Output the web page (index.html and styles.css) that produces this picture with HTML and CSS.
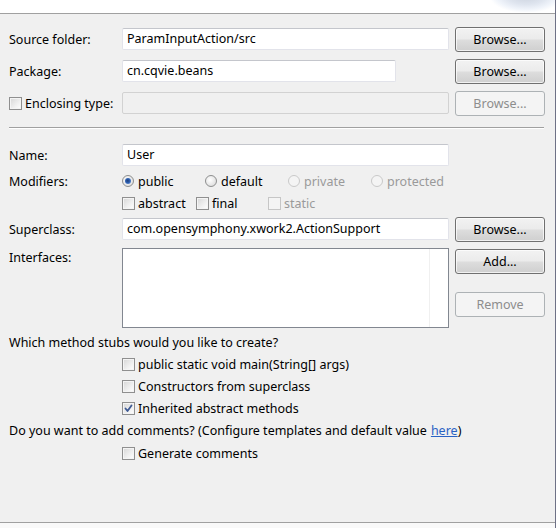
FILE: index.html
```html
<!DOCTYPE html>
<html>
<head>
<meta charset="utf-8">
<title>New Java Class</title>
<link rel="stylesheet" href="styles.css">
</head>
<body>
<div class="window">
  <div class="banner"><div class="banner-art"></div></div>
  <div class="main">
    <div class="row first">
      <span class="label">Source folder:</span>
      <div class="field">ParamInputAction/src</div>
      <button class="btn">Browse...</button>
    </div>
    <div class="row">
      <span class="label">Package:</span>
      <div class="field short">cn.cqvie.beans</div>
      <button class="btn">Browse...</button>
    </div>
    <div class="row">
      <span class="label check"><span class="box"></span>Enclosing type:</span>
      <div class="field disabled"></div>
      <button class="btn" disabled>Browse...</button>
    </div>
    <div class="sep"></div>
    <div class="row name-row">
      <span class="label">Name:</span>
      <div class="field flat">User</div>
    </div>
    <div class="opt-row modifiers">
      <span class="label">Modifiers:</span>
      <div class="radios">
        <span class="radio-item"><span class="radio on"></span>public</span>
        <span class="radio-item"><span class="radio"></span>default</span>
        <span class="radio-item off"><span class="radio"></span>private</span>
        <span class="radio-item off"><span class="radio"></span>protected</span>
      </div>
    </div>
    <div class="opt-row flags">
      <span class="label"></span>
      <div class="checks">
        <span class="check c-abstract"><span class="box"></span>abstract</span>
        <span class="check c-final"><span class="box"></span>final</span>
        <span class="check off"><span class="box"></span>static</span>
      </div>
    </div>
    <div class="row super-row">
      <span class="label">Superclass:</span>
      <div class="field">com.opensymphony.xwork2.ActionSupport</div>
      <button class="btn">Browse...</button>
    </div>
    <div class="row iface-row">
      <span class="label top">Interfaces:</span>
      <div class="listbox"><div class="list-col"></div></div>
      <div class="btn-col">
        <button class="btn">Add...</button>
        <button class="btn remove" disabled>Remove</button>
      </div>
    </div>
    <div class="lines">
      <div class="line">Which method stubs would you like to create?</div>
      <div class="line indent"><span class="check"><span class="box"></span>public static void main(String[] args)</span></div>
      <div class="line indent"><span class="check"><span class="box"></span>Constructors from superclass</span></div>
      <div class="line indent"><span class="check"><span class="box checked"><svg viewBox="0 0 11 11" width="11" height="11"><path d="M2.5 5.5 L4.5 8 L8.5 2.5" fill="none" stroke="#3e5a94" stroke-width="1.8" stroke-linecap="round" stroke-linejoin="round"/></svg></span>Inherited abstract methods</span></div>
      <div class="line comment-q">Do you want to add comments? (Configure templates and default value <a class="link" href="#">here</a>)</div>
      <div class="line indent"><span class="check"><span class="box"></span>Generate comments</span></div>
    </div>
  </div>
  <div class="footer"></div>
</div>
</body>
</html>
```
FILE: styles.css
```css
* { box-sizing: border-box; }
html, body { margin: 0; padding: 0; }
body {
  width: 558px;
  height: 528px;
  overflow: hidden;
  background: #ffffff;
  font-family: "Noto Sans", "Open Sans", sans-serif;
  font-size: 12.5px;
  color: #000;
}
.window {
  width: 556px;
  height: 528px;
  border-right: 1px solid #6e7186;
  display: flex;
  flex-direction: column;
}
.banner {
  position: relative;
  height: 14px;
  background: #ffffff;
  border-bottom: 1px solid #a0a0a0;
  overflow: hidden;
}
.banner-art {
  position: absolute;
  right: 0;
  top: -14px;
  width: 64px;
  height: 26px;
  background: radial-gradient(ellipse at 55% 35%, #c9d0dc 0%, #dfe5ef 40%, rgba(236,241,249,0.8) 60%, rgba(255,255,255,0) 75%);
}
.main {
  flex: 1;
  background: #f0f0f0;
  padding: 0 0 0 9px;
}
.footer {
  height: 6px;
  background: #f9f9f9;
  border-top: 1px solid #a0a0a0;
}
.row {
  display: grid;
  grid-template-columns: 107px 327px 90px;
  column-gap: 6px;
  align-items: start;
  height: 25px;
  margin-top: 7px;
}
.row.first { margin-top: 13px; }
.label {
  height: 25px;
  display: flex;
  align-items: center;
  white-space: nowrap;
}
.label.top { height: 18px; }
.field {
  height: 22px;
  margin-top: 1px;
  background: #fff;
  border: 1px solid #e2e3ea;
  border-top-color: #c4c6cc;
  border-radius: 2px;
  padding: 0 4px;
  line-height: 20px;
  white-space: nowrap;
  overflow: hidden;
}
.field.short { width: 274px; }
.field.disabled { background: #f0f0f0; border-color: #d2d2d2; }
.btn {
  width: 90px;
  height: 25px;
  padding: 0;
  font: inherit;
  color: #000;
  border: 1px solid #707070;
  border-radius: 3px;
  background: linear-gradient(#f2f2f2 0%, #ebebeb 48%, #dddddd 52%, #cfcfcf 100%);
  box-shadow: inset 0 0 0 1px rgba(255,255,255,0.7);
}
.btn:disabled {
  border-color: #adb2b5;
  background: #f4f4f4;
  color: #8d8d8d;
  box-shadow: none;
}
.sep {
  margin-top: 11px;
  margin-right: 11px;
  height: 2px;
  border-top: 1px solid #a0a0a0;
  border-bottom: 1px solid #ffffff;
}
.row.name-row { margin-top: 15px; height: 22px; }
.row.name-row .label { height: 22px; }
.row.name-row .field { margin-top: 0; }
.opt-row {
  display: grid;
  grid-template-columns: 113px auto;
  height: 18px;
  align-items: center;
}
.opt-row .label { height: 18px; }
.modifiers { margin-top: 6px; }
.flags { margin-top: 4px; }
.radios { display: flex; }
.radio-item {
  width: 83px;
  display: flex;
  align-items: center;
  white-space: nowrap;
}
.radio-item.off { color: #9a9a9a; }
.radio {
  width: 12px;
  height: 12px;
  margin-right: 4px;
  border-radius: 50%;
  border: 1px solid #8e8f8f;
  background: radial-gradient(circle at 40% 40%, #ffffff 0%, #e6e6e6 60%, #d4d4d4 100%);
  position: relative;
  flex: none;
}
.radio.on::after {
  content: "";
  position: absolute;
  left: 2px;
  top: 2px;
  width: 6px;
  height: 6px;
  border-radius: 50%;
  background: radial-gradient(circle at 45% 45%, #1c3f7a 0%, #2e5fb0 45%, #78a6e6 100%);
}
.radio-item.off .radio {
  border-color: #c9c9c9;
  background: #f4f4f4;
}
.checks { display: flex; }
.check {
  display: inline-flex;
  align-items: center;
  white-space: nowrap;
}
.check.off { color: #9a9a9a; }
.c-abstract { width: 74px; }
.c-final { width: 72px; }
.box {
  width: 13px;
  height: 13px;
  margin-right: 3px;
  border: 1px solid #8f8f8f;
  background: linear-gradient(135deg, #d6d6d6 0%, #f0f0f0 60%, #ffffff 100%);
  box-shadow: inset 0 0 0 1px #f4f4f4;
  display: flex;
  align-items: center;
  justify-content: center;
  flex: none;
}
.check.off .box {
  border-color: #c6c6c6;
  background: #f4f4f4;
  box-shadow: none;
}
.row.super-row { margin-top: 5px; }
.row.iface-row { margin-top: 6px; height: 80px; }
.listbox {
  position: relative;
  height: 80px;
  background: #fff;
  border: 1px solid #828790;
}
.list-col {
  position: absolute;
  top: 0;
  bottom: 0;
  left: 306px;
  width: 1px;
  background: #f0f0f0;
}
.btn-col {
  display: flex;
  flex-direction: column;
  padding-top: 1px;
}
.btn-col .remove { margin-top: 18px; }
.lines { margin-top: 3px; }
.line {
  height: 22px;
  display: flex;
  align-items: center;
  white-space: nowrap;
}
.line.indent { padding-left: 113px; }
.line.comment-q { height: 23px; }
.link { color: #2a62c4; text-decoration: underline; margin-left: 4px; }
```
